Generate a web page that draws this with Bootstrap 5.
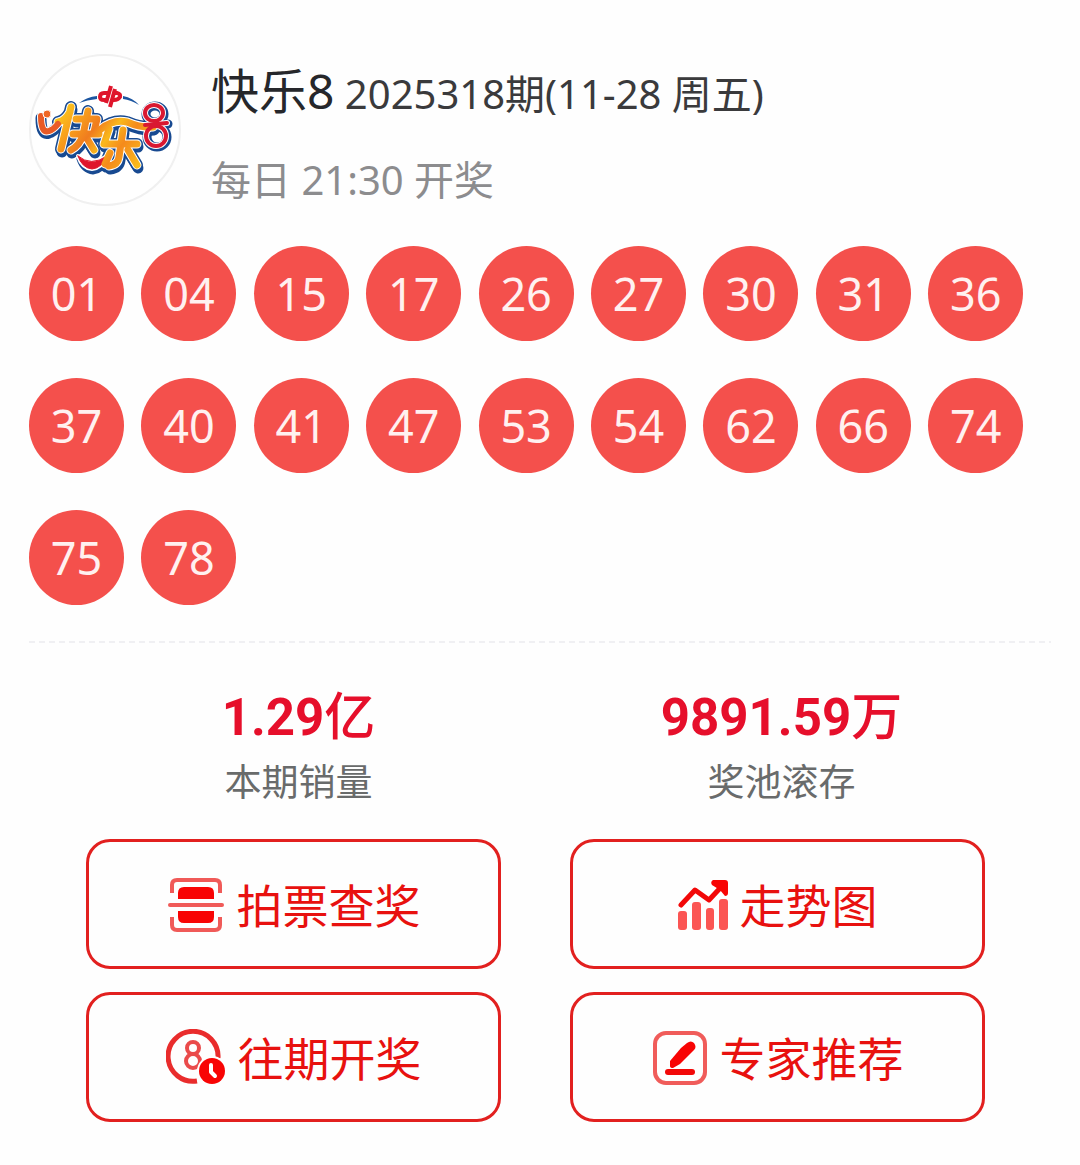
<!DOCTYPE html>
<html lang="zh-CN">
<head>
<meta charset="utf-8">
<meta name="viewport" content="width=device-width, initial-scale=1">
<title>快乐8 开奖</title>
<link rel="stylesheet" href="https://cdn.jsdelivr.net/npm/bootstrap@5.3.0/dist/css/bootstrap.min.css">
<style>
  body { background: #fefefe; font-family: "Noto Sans", "Noto Sans CJK SC", sans-serif; color: #2d2e31; }
  .draw-page { padding: 54px 29px 44px; }
  .game-logo { width: 152px; height: 152px; flex: none; }
  .draw-head { gap: 30px; margin-bottom: 40px; }
  .draw-title { font-size: 40px; line-height: 48px; margin: 13px 0 0; font-weight: 400; color: #3a3a3c; }
  .game-name { font-size: 48px; color: #26272b; }
  .draw-time { font-size: 40px; line-height: 48px; margin: 38px 0 0; color: #8c8c8e; }
  .ball-list { row-gap: 37px; margin-bottom: 36px; }
  .ball-cell { width: 11%; }
  .ball { width: 95px; height: 95px; background: #f4504c; color: #fff1f0; font-family: "Noto Sans", sans-serif; font-weight: 400; font-size: 45px; line-height: 1; padding-bottom: 1px; }
  .dash-line { height: 2px; background: repeating-linear-gradient(90deg, #f0f0f3 0 6px, transparent 6px 10px); }
  .stats { margin: 39px 28px 0; }
  .stat-value { font-family: Roboto, "Noto Sans CJK SC", sans-serif; font-weight: 700; font-size: 51px; line-height: 72px; color: #e60f2b; }
  .stat-unit { font-weight: 500; line-height: 1; }
  .stat-label { font-size: 37px; line-height: 48px; color: #696b6b; margin-top: 4px; }
  .actions { display: grid; grid-template-columns: 1fr 1fr; gap: 23px 69px; margin: 33px 66px 0 57px; }
  .action-btn { height: 130px; border: 3px solid #e2201f; border-radius: 24px; background: #fefefe; color: #e8110f; font-size: 46px; line-height: 60px; padding: 2px 0 0; gap: 12px; }
  .action-btn:hover { background: #fff3f3; color: #e8110f; border-color: #e2201f; }
  .action-btn svg { flex: none; }
</style>
</head>
<body>
<main class="draw-page">
  <header class="d-flex draw-head">
    <svg class="game-logo" viewBox="0 0 152 152" role="img" aria-label="快乐8">
      <defs>
        <linearGradient id="gold" gradientUnits="userSpaceOnUse" x1="30" y1="50" x2="115" y2="115">
          <stop offset="0" stop-color="#fbd21c"/><stop offset=".2" stop-color="#f9a51c"/><stop offset=".4" stop-color="#f07c1e"/><stop offset=".55" stop-color="#f9b81c"/><stop offset=".7" stop-color="#f58a1c"/><stop offset="1" stop-color="#fbc81c"/>
        </linearGradient>
        <g id="letters">
          <path d="M42 53L32 95M29 68Q36 67 41 58"/>
          <path d="M47 65H68L65 78M44 80H70M59 57L54 81Q51 91 42 96M57 83L65 96"/>
          <path d="M72 75Q84 65 98 68Q112 74 124 73M80 75L75 90H108M94 76L90 103Q89 111 80 112M81 99L76 110M99 96L108 111"/>
        </g>
        <g id="loops">
          <ellipse cx="125" cy="59" rx="9" ry="8"/><ellipse cx="127" cy="82" rx="10" ry="10"/><path d="M116 71L138 69"/>
        </g>
        <path id="hook" d="M12 62Q12 80 20 77Q24 76 29 70"/>
        <path id="smile" d="M49 102Q62 113 78 102Q73 114 63 115Q53 114 49 102Z"/>
      </defs>
      <circle cx="76" cy="76" r="75" fill="#fff" stroke="#f0f0f0" stroke-width="2"/>
      <path d="M50 49Q58 43 68 42V45Q58 46 50 49ZM94 42Q104 44 110 51Q102 46 94 45Z" fill="#1b55a0"/>
      <g fill="none" stroke="#df152b" stroke-width="4">
        <path d="M79 39H75Q71 39 71 43Q71 46 75 46H78M85 39H88Q92 40 91 43Q89 46 85 46H83"/>
        <path d="M82 32L77 49M86 35L81 53"/>
      </g>
      <g stroke-linecap="round" stroke-linejoin="round" fill="none">
        <g stroke="#184a91">
          <g stroke-width="11" transform="translate(1 3)"><use href="#letters"/><use href="#smile" stroke-width="5"/></g>
          <use href="#letters" stroke-width="12"/>
          <use href="#hook" stroke-width="11" transform="translate(0 2)"/>
          <use href="#loops" stroke-width="9" transform="translate(1 1)"/>
        </g>
        <g stroke="#fff"><use href="#letters" stroke-width="9"/><use href="#hook" stroke-width="8"/><use href="#smile" stroke-width="4"/><use href="#loops" stroke-width="6"/></g>
        <use href="#smile" stroke="#df152b" stroke-width="1" fill="#df152b"/>
        <use href="#letters" stroke="url(#gold)" stroke-width="7"/>
        <use href="#hook" stroke="#e95b26" stroke-width="6"/>
        <circle cx="18" cy="60" r="4" fill="#ef6725" stroke="#fff" stroke-width="1"/>
        <use href="#loops" stroke="#d91831" stroke-width="4"/>
      </g>
    </svg>
    <div>
      <h1 class="draw-title"><span class="game-name">快乐8</span> 2025318期(11-28 周五)</h1>
      <p class="draw-time">每日 21:30 开奖</p>
    </div>
  </header>

  <ul class="list-unstyled d-flex flex-wrap ball-list">
    <li class="ball-cell"><span class="ball rounded-circle d-flex align-items-center justify-content-center">01</span></li>
    <li class="ball-cell"><span class="ball rounded-circle d-flex align-items-center justify-content-center">04</span></li>
    <li class="ball-cell"><span class="ball rounded-circle d-flex align-items-center justify-content-center">15</span></li>
    <li class="ball-cell"><span class="ball rounded-circle d-flex align-items-center justify-content-center">17</span></li>
    <li class="ball-cell"><span class="ball rounded-circle d-flex align-items-center justify-content-center">26</span></li>
    <li class="ball-cell"><span class="ball rounded-circle d-flex align-items-center justify-content-center">27</span></li>
    <li class="ball-cell"><span class="ball rounded-circle d-flex align-items-center justify-content-center">30</span></li>
    <li class="ball-cell"><span class="ball rounded-circle d-flex align-items-center justify-content-center">31</span></li>
    <li class="ball-cell"><span class="ball rounded-circle d-flex align-items-center justify-content-center">36</span></li>
    <li class="ball-cell"><span class="ball rounded-circle d-flex align-items-center justify-content-center">37</span></li>
    <li class="ball-cell"><span class="ball rounded-circle d-flex align-items-center justify-content-center">40</span></li>
    <li class="ball-cell"><span class="ball rounded-circle d-flex align-items-center justify-content-center">41</span></li>
    <li class="ball-cell"><span class="ball rounded-circle d-flex align-items-center justify-content-center">47</span></li>
    <li class="ball-cell"><span class="ball rounded-circle d-flex align-items-center justify-content-center">53</span></li>
    <li class="ball-cell"><span class="ball rounded-circle d-flex align-items-center justify-content-center">54</span></li>
    <li class="ball-cell"><span class="ball rounded-circle d-flex align-items-center justify-content-center">62</span></li>
    <li class="ball-cell"><span class="ball rounded-circle d-flex align-items-center justify-content-center">66</span></li>
    <li class="ball-cell"><span class="ball rounded-circle d-flex align-items-center justify-content-center">74</span></li>
    <li class="ball-cell"><span class="ball rounded-circle d-flex align-items-center justify-content-center">75</span></li>
    <li class="ball-cell"><span class="ball rounded-circle d-flex align-items-center justify-content-center">78</span></li>
  </ul>

  <div class="dash-line"></div>

  <section class="row g-0 text-center stats">
    <div class="col-6">
      <div class="stat-value">1.29<span class="stat-unit">亿</span></div>
      <div class="stat-label">本期销量</div>
    </div>
    <div class="col-6">
      <div class="stat-value">9891.59<span class="stat-unit">万</span></div>
      <div class="stat-label">奖池滚存</div>
    </div>
  </section>

  <nav class="actions" aria-label="快乐8">
    <button type="button" class="btn action-btn d-flex align-items-center justify-content-center">
      <svg width="58" height="54" viewBox="0 0 58 54" fill="none">
        <path d="M5 15V7q0-5 5-5h38q5 0 5 5v8M5 39v8q0 5 5 5h38q5 0 5-5v-8" stroke="#f05a58" stroke-width="4"/>
        <path d="M11 21v-6q0-6 6-6h24q6 0 6 6v6ZM11 33h36v6q0 6-6 6H17q-6 0-6-6Z" fill="#f80404"/>
        <path d="M3 27h52" stroke="#f05a58" stroke-width="4" stroke-linecap="round"/>
      </svg>
      <span>拍票查奖</span>
    </button>
    <button type="button" class="btn action-btn d-flex align-items-center justify-content-center">
      <svg width="50" height="52" viewBox="0 0 50 52" fill="none">
        <g fill="#fb5553"><rect y="32" width="9" height="19" rx="3"/><rect x="14" y="23" width="9" height="28" rx="3"/><rect x="28" y="29" width="8" height="22" rx="3"/><rect x="41" y="20" width="9" height="31" rx="3"/></g>
        <path d="M3 26L17 11L31 21L45 6" stroke="#f20808" stroke-width="5" stroke-linecap="round" stroke-linejoin="round"/>
        <path d="M35 1h12q3 0 3 3v10q0 3-3 3L42 11L34 6Q32 3 35 1Z" fill="#f80404"/>
      </svg>
      <span>走势图</span>
    </button>
    <button type="button" class="btn action-btn d-flex align-items-center justify-content-center">
      <svg width="60" height="58" viewBox="0 0 60 58" fill="none">
        <path d="M31 52A25 25 0 1 1 52 29" stroke="#e92c2c" stroke-width="5"/>
        <g stroke="#ea4b4b" stroke-width="4"><circle cx="27" cy="19" r="6"/><circle cx="27" cy="32" r="7"/></g>
        <circle cx="46" cy="42" r="15" fill="#fefefe"/><circle cx="46" cy="42" r="13" fill="#f80404"/>
        <path d="M45 36v7l4 4" stroke="#fff" stroke-width="4" stroke-linecap="round" stroke-linejoin="round"/>
      </svg>
      <span>往期开奖</span>
    </button>
    <button type="button" class="btn action-btn d-flex align-items-center justify-content-center">
      <svg width="56" height="56" viewBox="0 0 56 56" fill="none">
        <rect x="3" y="3" width="50" height="50" rx="11" stroke="#f05c5a" stroke-width="4"/>
        <path d="M16 42h24" stroke="#f20808" stroke-width="6" stroke-linecap="round"/>
        <path d="M18 36v-5L29 18l6-5q4-3 7 0q3 4 0 7L28 34l-7 4q-3 0-3-2Z" fill="#f80404"/>
      </svg>
      <span>专家推荐</span>
    </button>
  </nav>
</main>
<script src="https://cdn.jsdelivr.net/npm/bootstrap@5.3.0/dist/js/bootstrap.bundle.min.js"></script>
</body>
</html>
